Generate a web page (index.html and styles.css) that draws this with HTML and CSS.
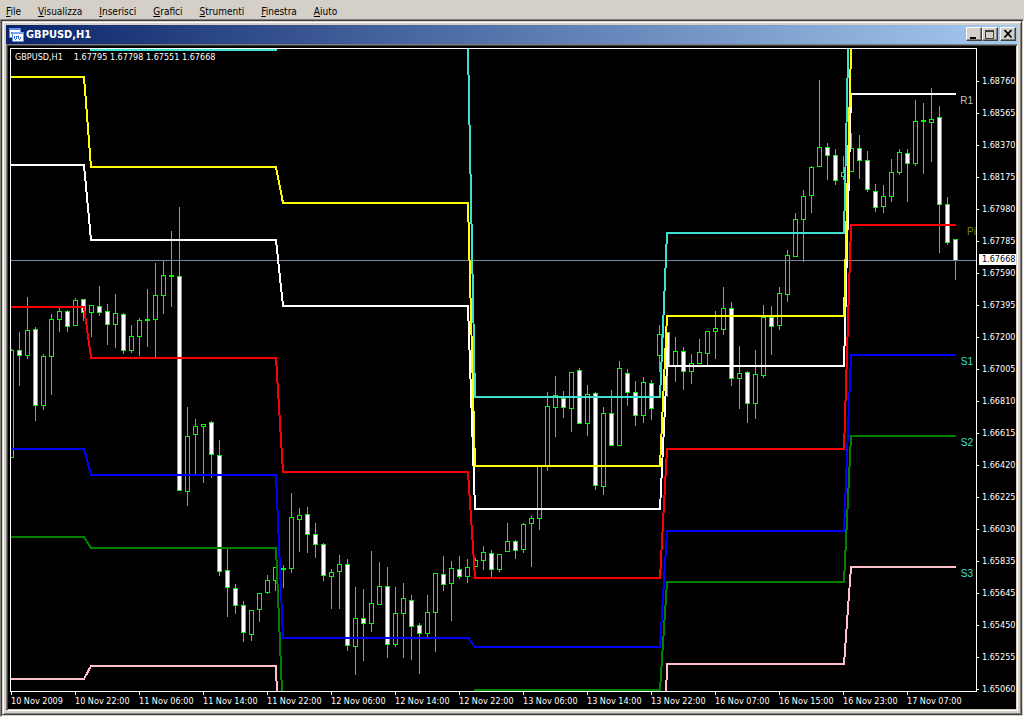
FILE: index.html
```html
<!DOCTYPE html>
<html lang="it">
<head>
<meta charset="utf-8">
<title>GBPUSD,H1</title>
<link rel="stylesheet" href="styles.css">
</head>
<body>
<nav class="menu">
  <button><u>F</u>ile</button>
  <button><u>V</u>isualizza</button>
  <button><u>I</u>nserisci</button>
  <button><u>G</u>rafici</button>
  <button><u>S</u>trumenti</button>
  <button><u>F</u>inestra</button>
  <button><u>A</u>iuto</button>
</nav>
<main class="workspace">
  <section class="window">
    <header class="titlebar">
      <svg class="app-icon" width="16" height="16" viewBox="0 0 16 16" shape-rendering="crispEdges">
        <rect x="1" y="1" width="11" height="9" fill="#fff" stroke="#5b8fe8"/>
        <rect x="1" y="1" width="11" height="2" fill="#5b8fe8"/>
        <path d="M3 7V5h1v2h2V5h1v2" fill="none" stroke="#3a6fd8"/>
        <rect x="4" y="5" width="11" height="9" fill="#fff" stroke="#5b8fe8"/>
        <rect x="4" y="5" width="11" height="2" fill="#79a8f4"/>
        <path d="M6 9l1 3h1l1-3h1l1 3h1l1-2" fill="none" stroke="#3a6fd8"/>
      </svg>
      <h1>GBPUSD,H1</h1>
      <div class="controls">
        <button class="ctl" aria-label="Riduci a icona"><svg width="14" height="12" shape-rendering="crispEdges"><path d="M3 9h6v2H3z"/></svg></button>
        <button class="ctl" aria-label="Ingrandisci"><svg width="14" height="12" shape-rendering="crispEdges"><path fill="#404040" d="M2 2h9v9H2zM3 4v6h7V4z" fill-rule="evenodd"/></svg></button>
        <button class="ctl ctl-close" aria-label="Chiudi"><svg width="14" height="12"><path d="M3.500 2l7 7.500M10.500 2l-7 7.500" stroke="#000" stroke-width="1.800"/></svg></button>
      </div>
    </header>
    <div class="chart">
      <div class="plot">
        <svg id="canvas" class="canvas" viewBox="11 49 965 642" preserveAspectRatio="none" shape-rendering="crispEdges">
          <g id="candles"></g>
          <path d="M11 260.500H976" stroke="#778899"/>
          <g class="levels">
            <path stroke="#ffc0cb" d="M11 679H84L91 666H276L284 900H660L667 664H844L851 567H956"/>
            <path stroke="#008000" d="M11 537H84L91 548H276L284 740H467L475 690H660L667 582H844L851 436H956"/>
            <path stroke="#0000ff" d="M11 449H84L91 475H276L283 638H468L475 647H660L667 531H844L851 355H956"/>
            <path stroke="#ff0000" d="M11 307H84L91 358H276L283 472H468L475 578H660L667 449H844L851 225H956"/>
            <path stroke="#ffffff" d="M11 165H84L91 240H276L283 306H468L475 509H660L667 366H844L851 94H956"/>
            <path stroke="#40e0d0" d="M90 50H277M467 0L475 397H660L667 233H844L852 -119"/>
            <path stroke="#ffff00" d="M11 77H84L91 167H276L283 203H468L475 466H660L667 316H844L852 12"/>
          </g>
        </svg>
        <div class="quote"><span>GBPUSD,H1</span><span>1.67795 1.67798 1.67551 1.67668</span></div>
        <span class="tag r1">R1</span>
        <span class="tag pivot">Pi</span>
        <span class="tag s1">S1</span>
        <span class="tag s2">S2</span>
        <span class="tag s3">S3</span>
      </div>
      <div class="prices">
        <span>1.68760</span><span>1.68565</span><span>1.68370</span><span>1.68175</span><span>1.67980</span>
        <span>1.67785</span><span>1.67590</span><span>1.67395</span><span>1.67200</span><span>1.67005</span>
        <span>1.66810</span><span>1.66615</span><span>1.66420</span><span>1.66225</span><span>1.66030</span>
        <span>1.65835</span><span>1.65645</span><span>1.65450</span><span>1.65255</span><span>1.65060</span>
        <b class="current">1.67668</b>
      </div>
      <div class="times">
        <span>10 Nov 2009</span><span>10 Nov 22:00</span><span>11 Nov 06:00</span><span>11 Nov 14:00</span><span>11 Nov 22:00</span>
        <span>12 Nov 06:00</span><span>12 Nov 14:00</span><span>12 Nov 22:00</span><span>13 Nov 06:00</span><span>13 Nov 14:00</span>
        <span>13 Nov 22:00</span><span>16 Nov 07:00</span><span>16 Nov 15:00</span><span>16 Nov 23:00</span><span>17 Nov 07:00</span>
      </div>
    </div>
  </section>
</main>
<script src="chart.js"></script>
</body>
</html>
```
FILE: styles.css
```css
* { box-sizing: border-box; }

body {
  margin: 0;
  height: 100vh;
  display: flex;
  flex-direction: column;
  overflow: hidden;
  background: #d4d0c8;
  color: #000;
  font-family: "DejaVu Sans Condensed", "DejaVu Sans", sans-serif;
  font-size: 10px;
}

button {
  padding: 0;
  border: 0;
  background: none;
  color: inherit;
  font: inherit;
}

.menu {
  flex: none;
  display: flex;
  gap: 17px;
  height: 19px;
  padding: 4px 6px 0;
}

.menu button { line-height: 15px; }
.menu u { text-underline-offset: 1px; }

.workspace {
  flex: 1;
  min-height: 0;
  display: flex;
  padding: 1px;
  border: 1px solid;
  border-color: #808080 #fff #fff #808080;
  box-shadow: inset 1px 1px #404040, inset -1px -1px #d4d0c8;
}

.window {
  flex: 1;
  min-width: 0;
  display: flex;
  flex-direction: column;
  padding: 3px;
  border: 1px solid;
  border-color: #d4d0c8 #404040 #404040 #d4d0c8;
  box-shadow: inset 1px 1px #fff, inset -1px -1px #808080;
}

.titlebar {
  flex: none;
  display: flex;
  align-items: center;
  height: 19px;
  padding: 0 2px;
  background: linear-gradient(90deg, #0a246a, #a6caf0);
  color: #fff;
}

.app-icon { margin-right: 2px; }

.titlebar h1 {
  flex: 1;
  margin: 0;
  font-size: 11px;
  font-weight: bold;
}

.controls { display: flex; margin-bottom: 2px; }

.ctl {
  width: 16px;
  height: 14px;
  border: 1px solid;
  border-color: #fff #404040 #404040 #fff;
  box-shadow: inset -1px -1px #808080;
  background: #d4d0c8;
}

.ctl svg { display: block; }
.ctl-close { margin-left: 2px; }

.chart {
  flex: 1;
  min-height: 0;
  display: grid;
  grid-template-columns: minmax(0, 1fr) 39px;
  grid-template-rows: minmax(0, 1fr) 17px;
  padding: 3px 1px 1px 3px;
  border: 1px solid;
  border-color: #808080 #fff #fff #808080;
  box-shadow: inset 1px 1px #404040, inset -1px -1px #d4d0c8;
  background: #000;
  color: #fff;
  font-size: 9px;
}

.plot {
  position: relative;
  border: 1px solid #fff;
  overflow: hidden;
}

.canvas {
  display: block;
  width: 100%;
  height: 100%;
}

.levels path { fill: none; stroke-width: 2; }

.quote {
  position: absolute;
  top: 2px;
  left: 4px;
  display: flex;
  gap: 11px;
  line-height: 12px;
}

.tag {
  position: absolute;
  right: 3px;
  line-height: 12px;
  font-family: "Liberation Sans", Arial, sans-serif;
  font-size: 10px;
  color: #40e0d0;
}

.r1 { top: 7.200%; color: #c0c0c0; }
.pivot { top: 27.500%; right: 0; color: #808000; }
.s1 { top: 47.800%; }
.s2 { top: 60.500%; }
.s3 { top: 80.800%; }

.prices {
  grid-row: 1 / 3;
  grid-column: 2;
  position: relative;
  display: flex;
  flex-direction: column;
  padding: 17px 0 4px;
}

.prices span {
  flex: 1;
  display: flex;
  align-items: center;
}

.prices span::before {
  content: "";
  width: 2px;
  height: 1px;
  margin-right: 3px;
  background: #fff;
}

.current {
  position: absolute;
  top: 31.200%;
  left: 2px;
  right: 0;
  padding-left: 3px;
  background: #fff;
  color: #000;
  font-weight: normal;
  line-height: 11px;
}

.times {
  display: grid;
  grid-template-columns: repeat(15, minmax(0, 1fr));
  padding: 0 6px 0 1px;
  white-space: nowrap;
}

.times span {
  line-height: 12px;
  text-indent: -2px;
}

.times span::before {
  content: "";
  display: block;
  width: 1px;
  height: 3px;
  background: #fff;
}
```
FILE: chart.js
```js
// One row per hour: high, body top, body bottom, low, and 1 when the close is below the open.
const bars = [
  [349,350,457,457,0],[332,350,355,385,1],[297,330,355,358,0],[327,329,405,420,1],[354,356,405,409,0],
  [314,319,356,394,0],[308,311,319,331,0],[310,311,326,331,1],[298,300,325,325,0],[299,299,312,320,1],
  [305,305,312,336,0],[286,306,312,315,1],[304,311,324,344,1],[294,313,324,347,0],[313,314,350,353,1],
  [325,336,350,352,0],[318,320,336,355,0],[289,319,320,346,0],[263,295,319,357,0],[261,275,295,313,0],
  [231,275,276,306,0],[207,276,490,490,1],[407,436,491,505,0],[419,426,434,474,0],[424,424,426,482,0],
  [421,422,454,477,1],[440,455,571,575,1],[548,570,587,616,1],[584,588,605,613,1],[601,605,632,641,1],
  [610,610,634,640,0],[593,593,609,621,0],[575,580,592,593,0],[567,567,580,590,0],[565,568,569,587,0],
  [493,517,568,572,0],[508,515,519,551,0],[507,514,534,552,1],[523,534,544,557,1],[543,544,575,580,1],
  [569,572,576,608,0],[555,564,571,608,0],[559,564,645,650,1],[587,618,646,674,0],[589,618,623,660,1],
  [551,603,623,631,0],[562,586,604,604,0],[567,586,644,657,1],[587,613,644,646,0],[583,598,613,657,0],
  [595,600,626,659,1],[623,625,633,673,1],[595,612,633,636,0],[573,573,612,651,0],[556,574,584,590,1],
  [561,568,583,620,0],[556,569,576,578,1],[559,567,576,582,0],[558,560,566,566,0],[546,552,560,569,0],
  [550,553,569,577,1],[554,554,569,571,0],[523,541,551,551,0],[540,541,550,558,1],[523,524,549,552,0],
  [516,518,523,566,0],[466,466,518,529,0],[392,406,466,470,0],[376,395,407,436,0],[391,398,407,417,1],
  [372,372,408,431,0],[368,370,423,423,1],[385,394,423,435,0],[392,393,485,489,1],[407,413,486,494,0],
  [390,413,445,445,1],[361,368,445,445,0],[369,373,392,405,1],[381,392,415,425,1],[377,382,415,422,0],
  [380,383,408,419,1],[325,334,355,371,0],[332,332,365,396,1],[337,351,365,381,0],[347,351,371,389,1],
  [354,363,371,383,0],[339,352,363,363,0],[331,331,353,365,0],[311,328,331,358,0],[287,308,329,334,0],
  [302,308,378,385,1],[346,373,378,408,0],[371,372,403,422,1],[350,374,403,418,0],[305,317,375,377,0],
  [306,317,326,354,1],[287,293,325,329,0],[250,255,294,301,0],[213,219,256,256,0],[190,196,219,261,0],
  [166,167,195,212,0],[80,147,166,166,0],[143,147,155,179,1],[149,155,180,184,1],[156,172,176,179,0],
  [133,148,171,171,0],[135,148,160,178,1],[151,160,189,191,1],[184,191,207,211,1],[185,196,206,212,0],
  [159,172,196,201,0],[149,152,172,174,0],[149,153,163,201,1],[100,121,163,165,0],[103,120,121,173,0],
  [88,119,122,161,0],[106,117,204,252,1],[197,204,242,244,1],[239,239,260,279,1]
];

const layer = document.getElementById("candles");

function rect(x, y, width, height, fill) {
  const node = document.createElementNS("http://www.w3.org/2000/svg", "rect");
  Object.entries({ x, y, width, height, fill }).forEach(([k, v]) => node.setAttribute(k, v));
  layer.appendChild(node);
}

bars.forEach(([high, top, bottom, low, down], i) => {
  const x = 11 + i * 8;
  rect(x, high, 1, low - high + 1, "#00ff00");
  rect(x - 2, top, 5, bottom - top + 1, "#00ff00");
  if (bottom - top > 1) {
    rect(x - 1, top + 1, 3, bottom - top - 1, down ? "#ffffff" : "#000000");
  }
});
```
